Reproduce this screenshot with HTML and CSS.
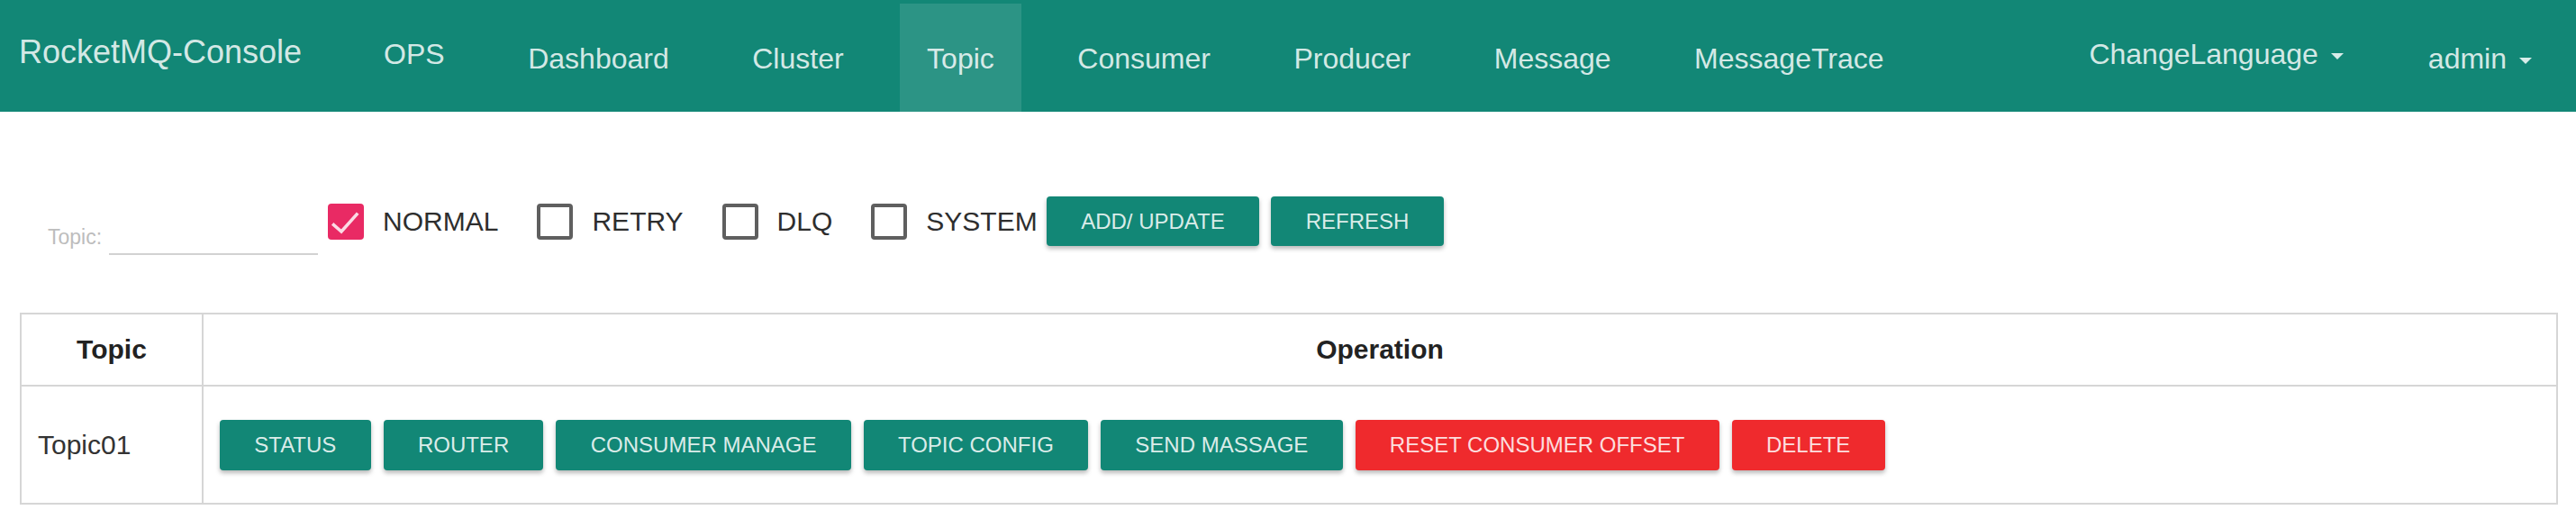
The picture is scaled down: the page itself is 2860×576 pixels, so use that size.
FILE: index.html
```html
<!DOCTYPE html>
<html lang="en">
<head>
<meta charset="utf-8">
<title>RocketMQ-Console</title>
<link rel="stylesheet" href="styles.css">
</head>
<body>
<nav class="navbar">
  <a class="brand">RocketMQ-Console</a>
  <ul class="nav nav-main">
    <li><a class="nav-link nav-high">OPS</a></li>
    <li><a class="nav-link">Dashboard</a></li>
    <li><a class="nav-link">Cluster</a></li>
    <li><a class="nav-link active">Topic</a></li>
    <li><a class="nav-link">Consumer</a></li>
    <li><a class="nav-link">Producer</a></li>
    <li><a class="nav-link">Message</a></li>
    <li><a class="nav-link">MessageTrace</a></li>
  </ul>
  <ul class="nav nav-right">
    <li><a class="nav-link nav-high">ChangeLanguage<span class="caret"></span></a></li>
    <li><a class="nav-link">admin<span class="caret"></span></a></li>
  </ul>
</nav>

<main class="content">
  <form class="toolbar">
    <div class="field">
      <label class="field-label">Topic:</label>
      <input class="field-input" type="text">
    </div>
    <label class="cb"><span class="box checked"><svg viewBox="0 0 40 40" width="40" height="40"><path d="M6.5 23.5 L15 31 L32 12" fill="none" stroke="#fbdbe5" stroke-width="3.6" stroke-linecap="square"/></svg></span>NORMAL</label>
    <label class="cb"><span class="box"></span>RETRY</label>
    <label class="cb"><span class="box"></span>DLQ</label>
    <label class="cb cb-last"><span class="box"></span>SYSTEM</label>
    <div class="btn-group">
      <button class="btn" type="button">ADD/ UPDATE</button>
      <button class="btn" type="button">REFRESH</button>
    </div>
  </form>

  <table class="grid">
    <thead>
      <tr>
        <th class="col-topic">Topic</th>
        <th>Operation</th>
      </tr>
    </thead>
    <tbody>
      <tr>
        <td class="topic-name">Topic01</td>
        <td>
          <div class="btn-group btn-group-row">
            <button class="btn" type="button">STATUS</button>
            <button class="btn" type="button">ROUTER</button>
            <button class="btn" type="button">CONSUMER MANAGE</button>
            <button class="btn" type="button">TOPIC CONFIG</button>
            <button class="btn" type="button">SEND MASSAGE</button>
            <button class="btn btn-danger" type="button">RESET CONSUMER OFFSET</button>
            <button class="btn btn-danger" type="button">DELETE</button>
          </div>
        </td>
      </tr>
    </tbody>
  </table>
</main>
</body>
</html>
```
FILE: styles.css
```css
* { box-sizing: border-box; }

html, body {
  margin: 0;
  padding: 0;
  background: #ffffff;
  font-family: "Liberation Sans", Arial, Helvetica, sans-serif;
  color: #333333;
}

/* ---------- navbar ---------- */
.navbar {
  display: flex;
  height: 124px;
  background: #128776;
  padding-right: 19px;
}

.brand {
  display: block;
  padding: 38px 0 0 21px;
  font-size: 36px;
  line-height: 40px;
  color: rgba(255, 255, 255, 0.84);
  white-space: nowrap;
}

.nav {
  display: flex;
  margin: 0;
  padding: 0;
  list-style: none;
}

.nav-main {
  margin-left: 61px;
  gap: 32.5px;
}

.nav-right {
  margin-left: auto;
  gap: 34px;
}

.nav-link {
  display: block;
  margin-top: 4px;
  height: 120px;
  padding: 41px 30px 0;
  font-size: 32px;
  line-height: 40px;
  color: rgba(255, 255, 255, 0.84);
  white-space: nowrap;
}

.nav-link.nav-high {
  padding-top: 36px;
}

.nav-link.active {
  background: rgba(255, 255, 255, 0.11);
}

.caret {
  display: inline-block;
  width: 0;
  height: 0;
  margin-left: 14px;
  vertical-align: middle;
  border-top: 7px solid rgba(255, 255, 255, 0.84);
  border-left: 7px solid transparent;
  border-right: 7px solid transparent;
}

/* ---------- toolbar ---------- */
.toolbar {
  display: flex;
  align-items: center;
  height: 55px;
  margin: 94px 0 0;
  padding-left: 53px;
}

.field {
  display: flex;
  align-items: flex-end;
  align-self: flex-end;
  margin-bottom: -10px;
  margin-right: 11px;
}

.field-label {
  font-size: 23px;
  line-height: 22px;
  color: #bdbdbd;
  margin-bottom: 9px;
  margin-right: 8px;
}

.field-input {
  width: 232px;
  height: 34px;
  padding: 0;
  border: none;
  border-bottom: 2px solid #d2d2d2;
  background: transparent;
  outline: none;
  font-size: 22px;
}

.cb {
  display: flex;
  align-items: center;
  margin-right: 43px;
  font-size: 30px;
  line-height: 40px;
  color: #2e2e2e;
  white-space: nowrap;
}

.cb-last {
  margin-right: 10px;
}

.box {
  display: block;
  width: 40px;
  height: 40px;
  margin-right: 21px;
  border: 4px solid #5f5f5f;
  border-radius: 4px;
}

.box.checked {
  border: none;
  background: #e92a64;
}

.box svg {
  display: block;
}

/* ---------- buttons ---------- */
.btn-group {
  display: flex;
  gap: 13px;
}

.btn-group-row {
  gap: 14px;
}

.btn {
  height: 55px;
  padding: 0 38.5px;
  border: none;
  border-radius: 4px;
  background: #128776;
  color: rgba(255, 255, 255, 0.86);
  font-family: "Liberation Sans", Arial, Helvetica, sans-serif;
  font-size: 24px;
  white-space: nowrap;
  box-shadow: 0 3px 5px rgba(0, 0, 0, 0.28);
}

.btn-group-row .btn {
  padding: 0 38.25px;
}

.btn-danger {
  background: #ef2a2d;
}

/* ---------- table ---------- */
.grid {
  width: calc(100% - 42px);
  margin: 74px 20px 0 22px;
  border-collapse: collapse;
  border: 2px solid #d6d6d6;
}

.grid th,
.grid td {
  border: 2px solid #d6d6d6;
  padding: 0 18px;
  vertical-align: middle;
}

.grid th {
  height: 80px;
  font-size: 30px;
  font-weight: bold;
  color: #222222;
  text-align: center;
}

.grid th.col-topic {
  width: 202px;
}

.grid td {
  height: 131px;
  font-size: 30px;
  color: #333333;
}

.grid td .btn {
  height: 56px;
}
```
